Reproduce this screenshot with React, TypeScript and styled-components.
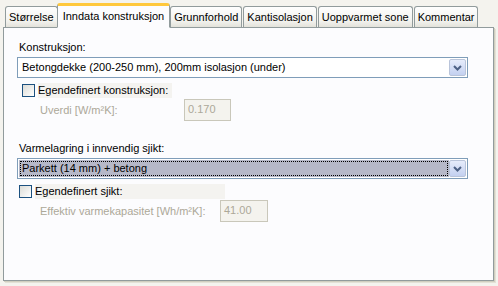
import styled, { createGlobalStyle } from 'styled-components';

const GlobalStyle = createGlobalStyle`
    html, body {
        margin: 0;
        padding: 0;
        background: #F4F3EE;
    }
    body {
        font-family: "Liberation Sans", Arial, sans-serif;
        font-size: 11px;
        color: #000;
    }
`;

const tabs = ['Størrelse', 'Inndata konstruksjon', 'Grunnforhold', 'Kantisolasjon', 'Uoppvarmet sone', 'Kommentar'];

function Chevron(){
    return(
        <svg width="9" height="6" viewBox="0 0 9 6">
            <path d="M1 1 L4.5 4.5 L8 1" fill="none" stroke="#4D6185" strokeWidth="2" />
        </svg>
    )
}

function Combo({ value, focused }: { value: string; focused?: boolean }){
    return(
        <ComboBox>
            <ComboField focused={focused}>
                <ComboText focused={focused}>{value}</ComboText>
            </ComboField>
            <ComboButton><Chevron /></ComboButton>
        </ComboBox>
    )
}

function App(){
    return(
        <>
            <GlobalStyle />
            <Window>
                <TabStrip>
                    {tabs.map((t, i) => (
                        <Tab key={t} active={i === 1}>{t}</Tab>
                    ))}
                </TabStrip>
                <Panel>
                    <Label>Konstruksjon:</Label>
                    <Combo value="Betongdekke (200-250 mm), 200mm isolasjon (under)" />
                    <CheckRow indent={5}>
                        <CheckBox />
                        <CheckLabel width={134}>Egendefinert konstruksjon:</CheckLabel>
                    </CheckRow>
                    <ValueRow labelWidth={144}>
                        <DisabledLabel>Uverdi [W/m²K]:</DisabledLabel>
                        <TextBox width={47}>0.170</TextBox>
                    </ValueRow>
                    <Label top={21}>Varmelagring i innvendig sjikt:</Label>
                    <Combo value="Parkett (14 mm) + betong" focused />
                    <CheckRow indent={2}>
                        <CheckBox />
                        <CheckLabel width={190}>Egendefinert sjikt:</CheckLabel>
                    </CheckRow>
                    <ValueRow labelWidth={180}>
                        <DisabledLabel>Effektiv varmekapasitet [Wh/m²K]:</DisabledLabel>
                        <TextBox width={48}>41.00</TextBox>
                    </ValueRow>
                </Panel>
            </Window>
        </>
    )
}

const Window = styled.div`
    width: 498px;
    height: 286px;
    padding: 3px 2px 0 3px;
    box-sizing: border-box;
    display: flex;
    flex-direction: column;
`;

const TabStrip = styled.div`
    display: flex;
    align-items: flex-end;
    height: 25px;
    padding-left: 2px;
    margin-bottom: -1px;
    position: relative;
    z-index: 1;
`;

const Tab = styled.div<{ active?: boolean }>`
    height: ${p => p.active ? 25 : 21}px;
    box-sizing: border-box;
    padding: ${p => p.active ? '3px 5px 0' : '3px 3px 0'};
    margin: ${p => p.active ? '0 -1px' : '0 0 1px 1px'};
    border: 1px solid #919B9C;
    border-bottom: ${p => p.active ? '1px solid #FCFCFE' : 'none'};
    border-top: ${p => p.active ? '3px solid #FFC83C' : '1px solid #919B9C'};
    border-radius: 3px 3px 0 0;
    background: ${p => p.active ? '#FCFCFE' : 'linear-gradient(#FEFEFE, #F2F2EE 70%, #E3E2DA)'};
    white-space: nowrap;
    line-height: 15px;
    color: #000;
    &:first-child { margin-left: 0; }
`;

const Panel = styled.div`
    width: 491px;
    height: 254px;
    box-sizing: border-box;
    background: #FCFCFE;
    border: 1px solid #919B9C;
    box-shadow: 1px 1px 0 #D0CEBF, 2px 2px 0 #E3E1D6;
    padding: 0 25px 0 13px;
    display: flex;
    flex-direction: column;
`;

const Label = styled.div<{ top?: number }>`
    margin-top: ${p => p.top ?? 13}px;
    padding-left: 2px;
    height: 16px;
    line-height: 13px;
    white-space: nowrap;
`;

const ComboBox = styled.div`
    height: 21px;
    box-sizing: border-box;
    border: 1px solid #7F9DB9;
    background: #FFF;
    display: flex;
    padding: 1px;
`;

const ComboField = styled.div<{ focused?: boolean }>`
    flex: 1;
    padding: 1px;
    background: ${p => p.focused ? '#B6B8C8' : '#FFF'};
    display: flex;
`;

const ComboText = styled.div<{ focused?: boolean }>`
    flex: 1;
    border: 1px dotted ${p => p.focused ? '#000' : 'transparent'};
    padding-left: 1px;
    line-height: 13px;
    color: #000;
    white-space: nowrap;
`;

const ComboButton = styled.div`
    width: 17px;
    height: 17px;
    box-sizing: border-box;
    border: 1px solid #B9C4DA;
    border-radius: 2px;
    background: linear-gradient(#E6ECFB, #C3D0F0);
    display: flex;
    align-items: center;
    justify-content: center;
`;

const CheckRow = styled.div<{ indent: number }>`
    display: flex;
    align-items: center;
    margin-top: 6px;
    padding-left: ${p => p.indent}px;
    height: 13px;
`;

const CheckBox = styled.div`
    width: 13px;
    height: 13px;
    box-sizing: border-box;
    border: 1px solid #1C5180;
    background: linear-gradient(135deg, #DCDCD7, #FFFFFF);
`;

const CheckLabel = styled.div<{ width: number }>`
    width: ${p => p.width}px;
    margin-left: 3px;
    background: #F4F3F0;
    line-height: 15px;
    white-space: nowrap;
`;

const ValueRow = styled.div<{ labelWidth: number }>`
    display: grid;
    grid-template-columns: ${p => p.labelWidth}px auto;
    align-items: center;
    margin-top: 2px;
    padding-left: 23px;
`;

const DisabledLabel = styled.div`
    color: #ACA899;
    line-height: 13px;
    white-space: nowrap;
`;

const TextBox = styled.div<{ width: number }>`
    width: ${p => p.width}px;
    height: 22px;
    box-sizing: border-box;
    border: 1px solid #C9C7BA;
    background: #F4F3EE;
    color: #ACA899;
    padding: 3px 3px;
    line-height: 13px;
`;

export default App;
